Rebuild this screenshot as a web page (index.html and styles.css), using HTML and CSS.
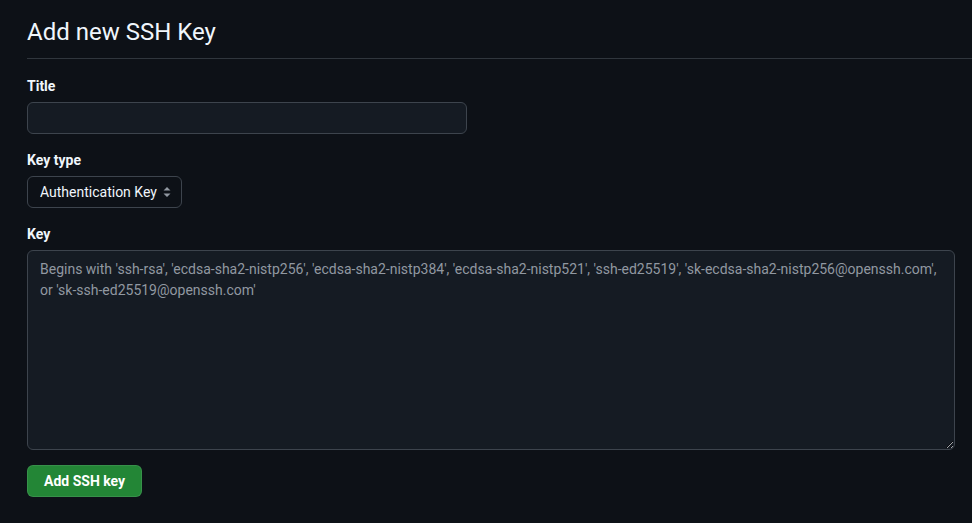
FILE: index.html
```html
<!DOCTYPE html>
<html lang="en">
<head>
<meta charset="utf-8">
<title>Add new SSH Key</title>
<link rel="stylesheet" href="styles.css">
</head>
<body>
<main class="page">
  <div class="subhead">
    <h1 class="subhead-title">Add new SSH Key</h1>
  </div>
  <form class="ssh-form">
    <div class="form-group first">
      <label class="form-label" for="title">Title</label>
      <input class="form-input title-input" id="title" type="text">
    </div>
    <div class="form-group">
      <label class="form-label" for="type">Key type</label>
      <div class="select-wrap">
        <select class="form-select" id="type">
          <option>Authentication Key</option>
          <option>Signing Key</option>
        </select>
        <svg class="select-arrow" width="16" height="16" viewBox="0 0 16 16" aria-hidden="true"><path d="M4.5 6.5 8 3l3.5 3.5z M4.5 9.5 8 13l3.5-3.5z" fill="#9198a1"/></svg>
      </div>
    </div>
    <div class="form-group">
      <label class="form-label" for="key">Key</label>
      <textarea class="form-input key-input" id="key" placeholder="Begins with 'ssh-rsa', 'ecdsa-sha2-nistp256', 'ecdsa-sha2-nistp384', 'ecdsa-sha2-nistp521', 'ssh-ed25519', 'sk-ecdsa-sha2-nistp256@openssh.com', or 'sk-ssh-ed25519@openssh.com'"></textarea>
    </div>
    <div class="form-actions">
      <button class="btn-primary" type="button">Add SSH key</button>
    </div>
  </form>
</main>
</body>
</html>
```
FILE: styles.css
```css
html {
  color-scheme: dark;
}

body {
  margin: 0;
  background: #0d1117;
  color: #f0f6fc;
  font-family: Roboto, "Liberation Sans", sans-serif;
  font-size: 14px;
  line-height: 1.5;
}

.page {
  padding: 14px 0 0 27px;
}

.subhead {
  border-bottom: 1px solid #30363d;
  padding-bottom: 8px;
}

.subhead-title {
  margin: 0;
  font-size: 24px;
  font-weight: 400;
  line-height: 36px;
  color: #f0f6fc;
}

.form-group {
  margin-top: 16px;
}

.form-group.first {
  margin-top: 17px;
}

.form-label {
  display: block;
  font-weight: 700;
  font-size: 14px;
  line-height: 20px;
  margin-bottom: 6px;
  color: #f0f6fc;
}

.form-input {
  display: block;
  box-sizing: border-box;
  background: #151b23;
  border: 1px solid #3d444d;
  border-radius: 6px;
  color: #f0f6fc;
  font-family: inherit;
  font-size: 14px;
  line-height: 20px;
  padding: 5px 12px;
  margin: 0;
  outline: none;
}

.title-input {
  width: 440px;
  height: 32px;
}

.select-wrap {
  position: relative;
  width: 155px;
}

.form-select {
  appearance: none;
  -webkit-appearance: none;
  display: block;
  box-sizing: border-box;
  width: 155px;
  height: 32px;
  background: #0d1117;
  border: 1px solid #3d444d;
  border-radius: 6px;
  color: #f0f6fc;
  font-family: inherit;
  font-size: 14px;
  padding: 0 20px 0 12px;
  margin: 0;
}

.select-arrow {
  position: absolute;
  right: 7px;
  top: 8px;
  pointer-events: none;
}

.key-input {
  width: 928px;
  height: 200px;
  padding: 8px 12px;
  line-height: 21px;
  resize: both;
}

.key-input::placeholder {
  color: #9198a1;
  opacity: 1;
}

.form-actions {
  margin-top: 15px;
}

.btn-primary {
  box-sizing: border-box;
  height: 32px;
  padding: 0 16px;
  background: #238636;
  border: 1px solid rgba(240, 246, 252, 0.1);
  border-radius: 6px;
  color: #ffffff;
  font-family: inherit;
  font-size: 14px;
  font-weight: 700;
  cursor: pointer;
}
```
